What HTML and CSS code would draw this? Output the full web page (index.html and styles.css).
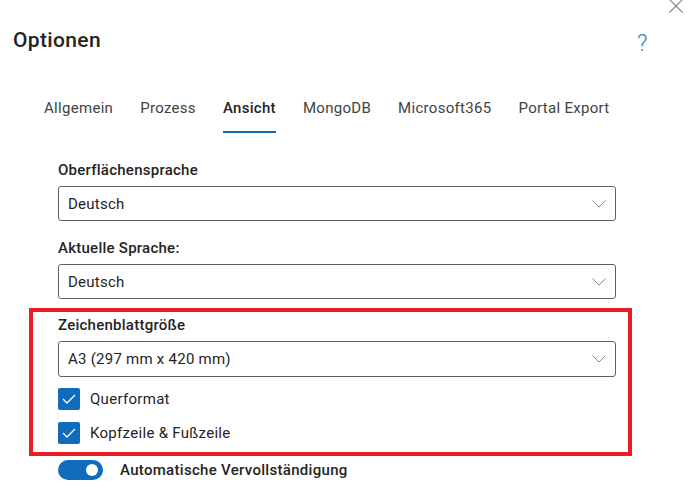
FILE: index.html
```html
<!DOCTYPE html>
<html lang="de">
<head>
<meta charset="utf-8">
<title>Optionen</title>
<link rel="stylesheet" href="styles.css">
</head>
<body>
<div class="dialog">
  <div class="header">
    <h1 class="title">Optionen</h1>
  </div>
  <button class="close" aria-label="Schließen">
    <svg width="14" height="14" viewBox="0 0 14 14"><path d="M0.5 0.5 L13.5 13.5 M13.5 0.5 L0.5 13.5" stroke="#8a8a8a" stroke-width="1.2" fill="none"/></svg>
  </button>
  <span class="help">?</span>

  <nav class="tabs">
    <span class="tab">Allgemein</span>
    <span class="tab">Prozess</span>
    <span class="tab active">Ansicht</span>
    <span class="tab">MongoDB</span>
    <span class="tab">Microsoft365</span>
    <span class="tab">Portal Export</span>
  </nav>

  <div class="form">
    <div class="field">
      <div class="label">Oberflächensprache</div>
      <div class="select"><span>Deutsch</span><svg class="chev" width="14" height="8" viewBox="0 0 14 8"><path d="M0.5 0.5 L7 7 L13.5 0.5" stroke="#8a8a8a" stroke-width="1" fill="none"/></svg></div>
    </div>
    <div class="field">
      <div class="label">Aktuelle Sprache:</div>
      <div class="select"><span>Deutsch</span><svg class="chev" width="14" height="8" viewBox="0 0 14 8"><path d="M0.5 0.5 L7 7 L13.5 0.5" stroke="#8a8a8a" stroke-width="1" fill="none"/></svg></div>
    </div>

    <div class="highlight">
      <div class="label">Zeichenblattgröße</div>
      <div class="select tall"><span>A3 (297 mm x 420 mm)</span><svg class="chev" width="14" height="8" viewBox="0 0 14 8"><path d="M0.5 0.5 L7 7 L13.5 0.5" stroke="#8a8a8a" stroke-width="1" fill="none"/></svg></div>
      <div class="check first">
        <span class="box"><svg width="14" height="10" viewBox="0 0 14 10"><path d="M1 5 L5 9 L13 1" stroke="#fff" stroke-width="1.3" fill="none"/></svg></span>
        <span>Querformat</span>
      </div>
      <div class="check">
        <span class="box"><svg width="14" height="10" viewBox="0 0 14 10"><path d="M1 5 L5 9 L13 1" stroke="#fff" stroke-width="1.3" fill="none"/></svg></span>
        <span>Kopfzeile &amp; Fußzeile</span>
      </div>
    </div>

    <div class="toggle-row">
      <span class="toggle"><span class="knob"></span></span>
      <span>Automatische Vervollständigung</span>
    </div>
  </div>
</div>
</body>
</html>
```
FILE: styles.css
```css
html, body {
  margin: 0;
  padding: 0;
  background: #fff;
}
body {
  font-family: Roboto, "Noto Sans", "Liberation Sans", sans-serif;
  color: #242424;
  overflow: hidden;
}
.dialog {
  position: relative;
  width: 689px;
  height: 491px;
  overflow: hidden;
}
.header {
  padding: 26px 0 0 13px;
}
.title {
  margin: 0;
  font-size: 21px;
  line-height: 28px;
  font-weight: 500;
  color: #242424;
  letter-spacing: 0.35px;
}
.close {
  position: absolute;
  top: -1px;
  right: 6px;
  width: 14px;
  height: 14px;
  padding: 0;
  border: 0;
  background: none;
  display: block;
}
.close svg { display: block; }
.help {
  position: absolute;
  left: 637px;
  top: 31px;
  font-size: 23px;
  line-height: 26px;
  font-weight: 300;
  color: #2b88d8;
}
.tabs {
  display: flex;
  gap: 27px;
  margin: 44px 0 0 44px;
}
.tab {
  font-size: 15px;
  line-height: 20px;
  color: #424242;
  padding-bottom: 13px;
  border-bottom: 2px solid transparent;
  letter-spacing: 0.3px;
}
.tab.active {
  font-weight: 500;
  color: #242424;
  border-bottom-color: #0f6cbd;
}
.form {
  padding: 27px 73px 0 58px;
}
.field + .field {
  margin-top: 17px;
}
.label {
  font-size: 15px;
  line-height: 20px;
  font-weight: 500;
  color: #242424;
  margin-bottom: 6px;
  letter-spacing: 0.25px;
}
.select {
  height: 35px;
  box-sizing: border-box;
  border: 1px solid #616161;
  border-radius: 3px;
  display: flex;
  align-items: center;
  justify-content: space-between;
  padding: 0 9px 0 9px;
  font-size: 15px;
  color: #242424;
  letter-spacing: 0.25px;
}
.select.tall { height: 36px; }
.chev { display: block; }
.highlight {
  margin: 9px -16px 0 -29px;
  border: 4px solid #ed1c24;
  padding: 3px 12px 8px 25px;
}
.check {
  display: flex;
  align-items: center;
  gap: 10px;
  margin-top: 12px;
  font-size: 15px;
  line-height: 22px;
  letter-spacing: 0.3px;
}
.check.first { margin-top: 11px; }
.box {
  width: 22px;
  height: 22px;
  border-radius: 2px;
  background: #0f6cbd;
  display: flex;
  align-items: center;
  justify-content: center;
}
.box svg { display: block; }
.toggle-row {
  display: flex;
  align-items: center;
  gap: 17px;
  margin-top: 4px;
  font-size: 15px;
  line-height: 20px;
  font-weight: 500;
  letter-spacing: 0.3px;
}
.toggle {
  width: 45px;
  height: 20px;
  border-radius: 10px;
  background: #0f6cbd;
  display: flex;
  align-items: center;
  justify-content: flex-end;
  padding-right: 5px;
  box-sizing: border-box;
}
.knob {
  width: 12px;
  height: 12px;
  border-radius: 50%;
  background: #fff;
}
```
